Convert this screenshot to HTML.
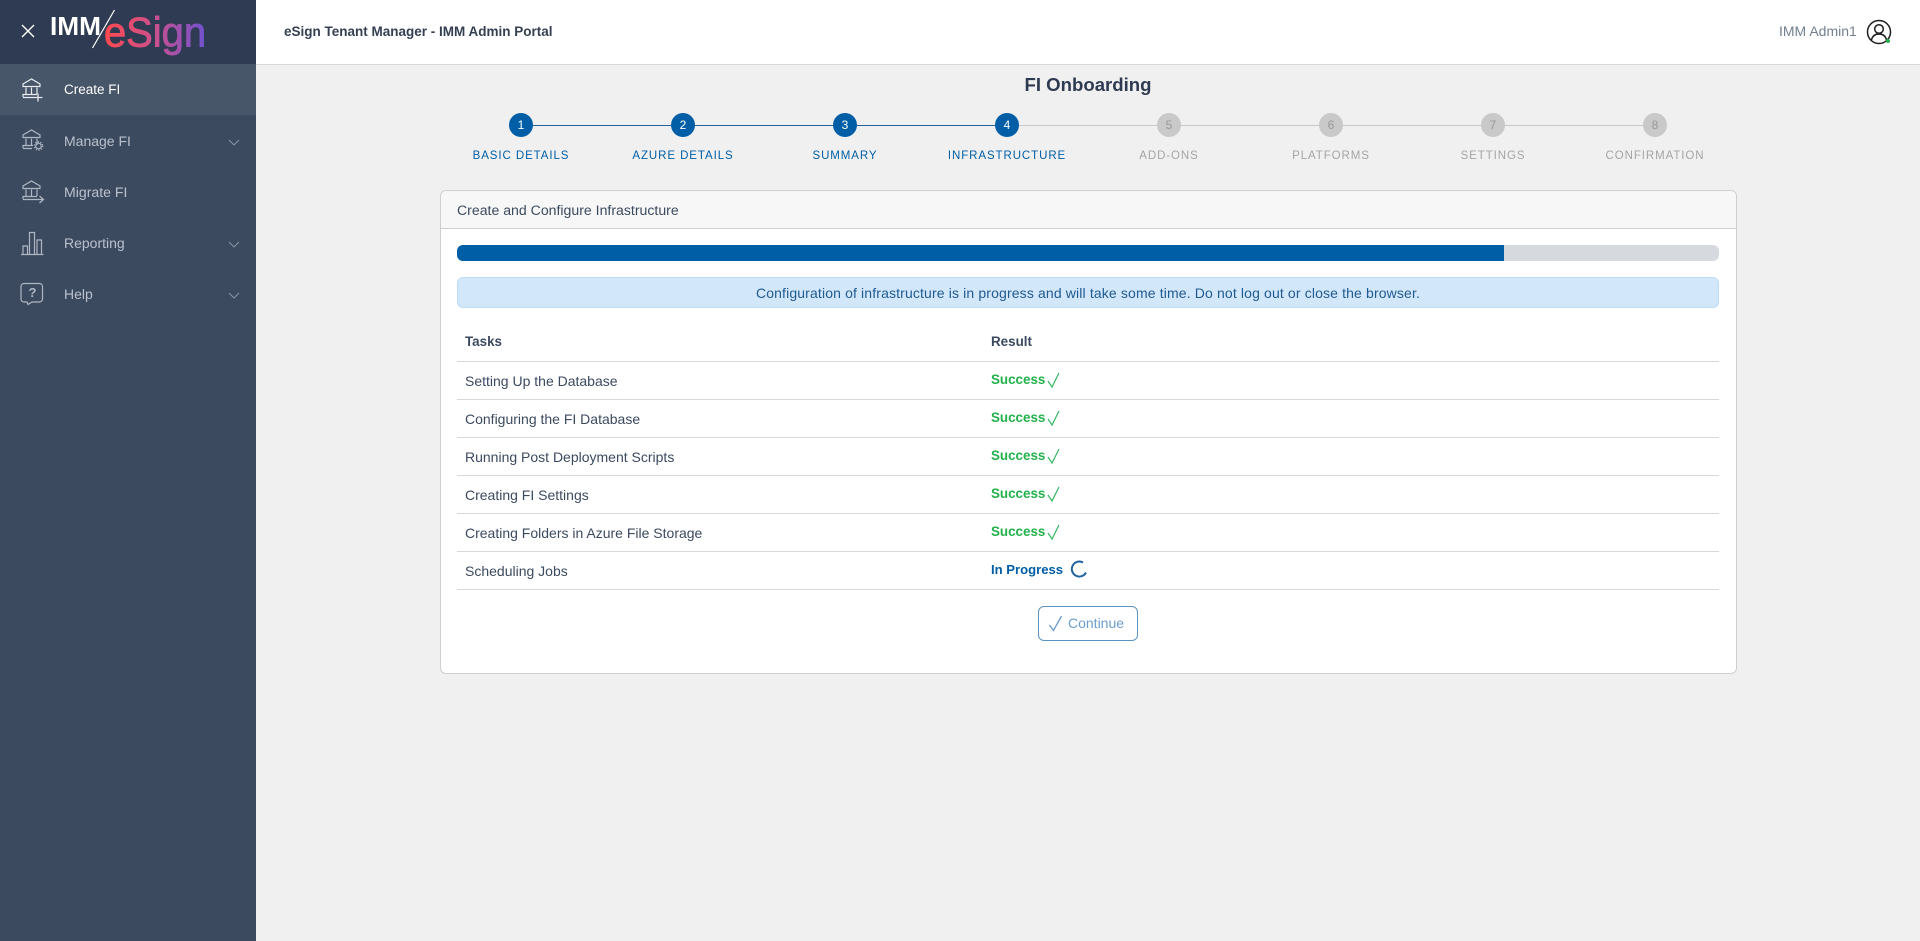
<!DOCTYPE html>
<html><head><meta charset="utf-8"><title>FI Onboarding</title>
<style>
html,body{margin:0;padding:0;width:1920px;height:941px;overflow:hidden;background:#f0f0f0;font-family:"Liberation Sans",sans-serif;color:#3c4a60}
.a{position:absolute}
.t{position:absolute;white-space:nowrap;line-height:20px;font-size:14px}
.c{transform:translateX(-50%)}
.m{color:#bac1cc;left:64px;font-size:14px}
.st{position:absolute;width:24px;height:24px;border-radius:50%;top:113px;background:#005ea6;color:#fff;font-size:12px;line-height:24px;text-align:center;transform:translateX(-12px)}
.st.o{background:#c9c9c9;color:#999}
.l{position:absolute;top:146px;line-height:20px;font-size:11.5px;letter-spacing:.92px;white-space:nowrap;color:#005ea6;transform:translateX(-50%)}
.l.o{color:#a5a5a5}
.ln{position:absolute;left:457px;width:1262px;height:1px;background:#d9d9d9}
.g{color:#22b14c;font-weight:bold;left:991px;font-size:13.4px}
svg{position:absolute;overflow:visible}
</style></head><body>
<div class="a" style="left:0;top:0;width:256px;height:941px;background:#3c4a60"></div>
<div class="a" style="left:0;top:0;width:256px;height:64px;background:#2f3b52"></div>
<div class="a" style="left:0;top:64px;width:256px;height:51px;background:#485669"></div>
<div class="a" style="left:256px;top:0;width:1664px;height:64px;background:#fff;border-bottom:1px solid #d6d8dd"></div>

<svg style="left:0;top:0" width="256" height="64" fill="none">
<path d="M22 25L34 37M34 25L22 37" stroke="#fff" stroke-width="1.4"/>
<path d="M92.500 48L114.500 10" stroke="#fff" stroke-width="1.2"/>
<defs><linearGradient id="lg" x1="105" x2="206" y1="0" y2="0" gradientUnits="userSpaceOnUse"><stop offset="0" stop-color="#ff4a4f"/><stop offset=".5" stop-color="#c9508f"/><stop offset="1" stop-color="#6f52d0"/></linearGradient></defs>
<text x="50" y="35" font-family="Liberation Sans" font-weight="bold" font-size="26" fill="#fff" textLength="51" lengthAdjust="spacingAndGlyphs">IMM</text>
<text x="104" y="46.500" font-family="Liberation Sans" font-size="42" fill="url(#lg)" stroke="url(#lg)" stroke-width=".9" textLength="102" lengthAdjust="spacingAndGlyphs">eSign</text>
</svg>

<svg style="left:0;top:64px" width="256" height="260" fill="none" stroke="#dfe3e8" stroke-width="1.2">
<g id="b1" stroke="#e8ebef"><path d="M23 22.500V20L31.500 15L40 20V22.500ZM26 23.500V30M31.500 23.500V30M37 23.500V30M23 33V30.500H37M23 33.500H33.500"/><path d="M33.500 33.500H42.500M38 29.500V37.500" stroke-width="1.3"/></g>
<g stroke="#aeb6c2"><path d="M23 73.500V71L31.500 66L40 71V73.500ZM26 74.500V81M31.500 74.500V81M37 74.500V81M23 84V81.500H33M23 84.500H32"/><circle cx="38.500" cy="82" r="2.800"/><circle cx="38.500" cy="82" r="4.200" stroke-dasharray="1.200 1.500" stroke-width="1.300"/>
<path d="M23 124.500V122L31.500 117L40 122V124.500ZM26 125.500V132M31.500 125.500V132M37 125.500V132M23 135V132.500H37M23 135.500H43M39.500 132L43.500 135.500L39.500 139"/>
<path d="M21 190.500H43.500M23 190V182H27.500V190M29.500 190V168.500H34.500V190M37 190V176H41.500V190"/>
<path d="M24 219.500H39.500A3 3 0 0 1 42.500 222.500V235A3 3 0 0 1 39.500 238H32L28 240.500L27 238H24A3 3 0 0 1 21 235V222.500A3 3 0 0 1 24 219.500Z"/></g>
<g stroke="#8f99a8" stroke-width=".9"><path d="M229 76L234 81L239 76M229 178L234 183L239 178M229 229L234 234L239 229"/></g>
</svg>
<div class="t m" style="top:80px;color:#fff;font-size:13.500px">Create FI</div>
<div class="t m" style="top:131px">Manage FI</div>
<div class="t m" style="top:182px;font-size:14.100px">Migrate FI</div>
<div class="t m" style="top:233px">Reporting</div>
<div class="t m" style="top:284px">Help</div>
<div class="t" style="left:32px;top:283px;width:1px;font-size:13px;font-weight:bold;color:#aeb6c2;text-indent:-3.500px">?</div>

<div class="t" style="left:284px;top:22px;font-weight:bold;font-size:13.500px;color:#343f52">eSign Tenant Manager - IMM Admin Portal</div>
<div class="t" style="left:1779px;top:21px;font-size:14px;color:#72808f">IMM Admin1</div>
<svg style="left:1866px;top:19px" width="28" height="28" fill="none" stroke="#1d1d1f" stroke-width="1.500">
<circle cx="13" cy="13" r="11.500"/><circle cx="13" cy="10" r="4.300"/><path d="M5.500 21C6.500 16.500 9.500 15 13 15S19.500 16.500 20.500 21"/>
<circle cx="22" cy="22" r="2" fill="#22b14c" stroke="none"/></svg>

<div class="t" style="left:1088px;top:75px;transform:translateX(-50%);font-size:18.600px;font-weight:bold;color:#2f3b52">FI Onboarding</div>

<div class="a" style="left:521px;top:125px;width:486px;height:1px;background:#1f639f"></div>
<div class="a" style="left:1007px;top:125px;width:648px;height:1px;background:#cacaca"></div>
<div class="st" style="left:521px">1</div><div class="st" style="left:683px">2</div><div class="st" style="left:845px">3</div><div class="st" style="left:1007px">4</div>
<div class="st o" style="left:1169px">5</div><div class="st o" style="left:1331px">6</div><div class="st o" style="left:1493px">7</div><div class="st o" style="left:1655px">8</div>
<div class="l" style="left:521px">BASIC DETAILS</div><div class="l" style="left:683px">AZURE DETAILS</div><div class="l" style="left:845px">SUMMARY</div><div class="l" style="left:1007px">INFRASTRUCTURE</div>
<div class="l o" style="left:1169px">ADD-ONS</div><div class="l o" style="left:1331px">PLATFORMS</div><div class="l o" style="left:1493px">SETTINGS</div><div class="l o" style="left:1655px">CONFIRMATION</div>

<div class="a" style="left:440px;top:190px;width:1295px;height:482px;background:#fff;border:1px solid #cfcfcf;border-radius:6px"></div>
<div class="a" style="left:441px;top:191px;width:1295px;height:37px;background:#f7f7f7;border-bottom:1px solid #cfcfcf;border-radius:5px 5px 0 0"></div>
<div class="t" style="left:457px;top:200px;font-size:14.100px">Create and Configure Infrastructure</div>
<div class="a" style="left:457px;top:245px;width:1262px;height:16px;background:#d6d9de;border-radius:6px;overflow:hidden"><div style="width:1047px;height:16px;background:#005ea6"></div></div>
<div class="a" style="left:457px;top:277px;width:1260px;height:29px;background:#d3e7fb;border:1px solid #bfdcf6;border-radius:6px"></div>
<div class="t c" style="left:1088px;top:283px;color:#1f5a91;font-size:14px;letter-spacing:.14px">Configuration of infrastructure is in progress and will take some time. Do not log out or close the browser.</div>

<div class="t" style="left:465px;top:332px;font-weight:bold;font-size:13.400px">Tasks</div>
<div class="t" style="left:991px;top:332px;font-weight:bold;font-size:13.400px">Result</div>
<div class="ln" style="top:361px"></div><div class="ln" style="top:399px"></div><div class="ln" style="top:437px"></div><div class="ln" style="top:475px"></div><div class="ln" style="top:513px"></div><div class="ln" style="top:551px"></div><div class="ln" style="top:589px"></div>
<div class="t" style="left:465px;top:371px">Setting Up the Database</div>
<div class="t" style="left:465px;top:409px">Configuring the FI Database</div>
<div class="t" style="left:465px;top:447px">Running Post Deployment Scripts</div>
<div class="t" style="left:465px;top:485px">Creating FI Settings</div>
<div class="t" style="left:465px;top:523px">Creating Folders in Azure File Storage</div>
<div class="t" style="left:465px;top:561px">Scheduling Jobs</div>
<div class="t g" style="top:370px">Success</div><div class="t g" style="top:408px">Success</div><div class="t g" style="top:446px">Success</div><div class="t g" style="top:484px">Success</div><div class="t g" style="top:522px">Success</div>
<div class="t" style="left:991px;top:560px;font-weight:bold;font-size:13.100px;color:#005ea6">In Progress</div>
<svg style="left:0;top:0" width="1920" height="941" fill="none" stroke="#35b863" stroke-width="1.200">
<path d="M1048 381L1052 387L1059 373M1048 419L1052 425L1059 411M1048 457L1052 463L1059 449M1048 495L1052 501L1059 487M1048 533L1052 539L1059 525"/>
<path d="M1083 562.500A7.500 7.500 0 1 0 1086 572.500" stroke="#1f639f" stroke-width="2"/>
</svg>

<div class="a" style="left:1038px;top:606px;width:98px;height:33px;border:1px solid #5b93c4;border-radius:6px;background:#fff"></div>
<svg style="left:1049px;top:615px" width="14" height="18" fill="none" stroke="#6b9dcb" stroke-width="1.300"><path d="M0.500 10L4.500 15.500L12.500 1"/></svg>
<div class="t" style="left:1068px;top:613px;color:#6d9fcc;font-size:14px">Continue</div>
</body></html>
